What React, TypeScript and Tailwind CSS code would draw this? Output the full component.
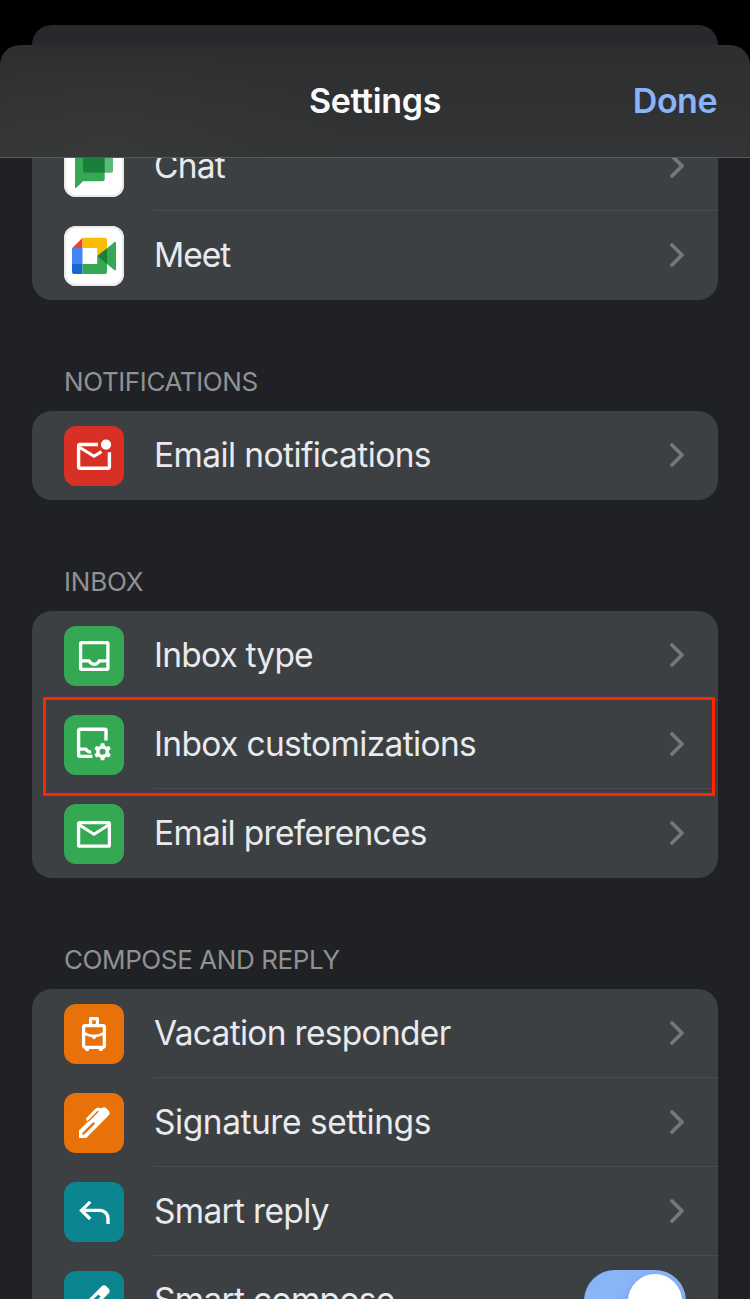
import type { ReactNode } from 'react';

const FONT = "font-['Inter','Liberation_Sans',sans-serif]";

function Chevron() {
  return (
    <svg className="mr-[33px] h-[26px] w-[16px] shrink-0" viewBox="0 0 16 26" fill="none">
      <path d="M3 3 L13 13 L3 23" stroke="#75787b" strokeWidth="3.8" strokeLinecap="round" strokeLinejoin="round" />
    </svg>
  );
}

function Glyph({ children }: { children: ReactNode }) {
  return (
    <svg className="h-[60px] w-[60px]" viewBox="0 0 60 60" fill="none">
      {children}
    </svg>
  );
}

const ChatIcon = () => (
  <Glyph>
    <path d="M11 10 H38.7 a2 2 0 0 1 2 2 V42.3 a2 2 0 0 1-2 2 H19 L12.4 50.8 Q11 51.6 11 50 Z" fill="#34a853" />
    <path d="M19 8 H47 a2 2 0 0 1 2 2 V33.7 a2 2 0 0 1-2 2 H19 Z" fill="#5bb974" />
    <path d="M19 8 H40.7 V35.7 H21 a2 2 0 0 1-2-2 Z" fill="#188038" />
  </Glyph>
);

const MeetIcon = () => (
  <Glyph>
    <path d="M8 22.2 L18.5 11.7 V22.2 Z" fill="#ea4335" />
    <path d="M8 22 H18.5 V38 H8 Z" fill="#4285f4" />
    <path d="M8 38 H18.5 V48 H10 a2 2 0 0 1-2-2 Z" fill="#1967d2" />
    <path d="M18.5 11.7 H41 a2 2 0 0 1 2 2 V24 L33.2 30 V22 H18.5 Z" fill="#fbbc04" />
    <path d="M18.5 38 H33.2 V30 L43 37 V46 a2 2 0 0 1-2 2 H18.5 Z" fill="#34a853" />
    <path d="M43 22.3 L50.3 16.2 Q52 15.2 52 17 V43 Q52 45.2 50.3 44 L43 38 Z" fill="#34a853" />
    <path d="M33.2 30 L43 22.2 V38 Z" fill="#188038" />
  </Glyph>
);

const MailUnreadIcon = () => (
  <Glyph>
    <path d="M34 18.5 H16 a1.4 1.4 0 0 0-1.4 1.4 V40.8 a1.4 1.4 0 0 0 1.4 1.4 H44 a1.4 1.4 0 0 0 1.4-1.4 V26.3" stroke="#fff" strokeWidth="3.4" />
    <path d="M15 21 L30 30.2 L37.5 25.6" stroke="#fff" strokeWidth="3.1" />
    <circle cx="42" cy="18.6" r="5.1" fill="#fff" />
  </Glyph>
);

const InboxIcon = () => (
  <Glyph>
    <rect x="16.6" y="16.6" width="27.3" height="26.7" rx="1" stroke="#fff" strokeWidth="3.3" />
    <path d="M16 34.8 H25 Q27 38.4 30.2 38.4 T35.4 34.8 H44" stroke="#fff" strokeWidth="3.2" />
  </Glyph>
);

const InboxGearIcon = () => (
  <Glyph>
    <path d="M42 25.4 V15.4 a1.1 1.1 0 0 0-1.1-1.1 H15.7 a1.1 1.1 0 0 0-1.1 1.1 V40.3 a1.1 1.1 0 0 0 1.1 1.1 H28.4" stroke="#fff" strokeWidth="3.4" />
    <path d="M14.6 32.4 H22.6 Q24.2 35 27.2 35.6 V38.8 Q23 38.6 20.6 35.8 H14.6 Z" fill="#fff" />
    <circle cx="38.6" cy="36.7" r="4.7" stroke="#fff" strokeWidth="3.3" />
    <g fill="#fff">
      <path d="M36 32.4 L36.9 28.2 H40.3 L41.2 32.4 Z" />
      <path transform="rotate(60 38.6 36.7)" d="M36 32.4 L36.9 28.2 H40.3 L41.2 32.4 Z" />
      <path transform="rotate(120 38.6 36.7)" d="M36 32.4 L36.9 28.2 H40.3 L41.2 32.4 Z" />
      <path transform="rotate(180 38.6 36.7)" d="M36 32.4 L36.9 28.2 H40.3 L41.2 32.4 Z" />
      <path transform="rotate(240 38.6 36.7)" d="M36 32.4 L36.9 28.2 H40.3 L41.2 32.4 Z" />
      <path transform="rotate(300 38.6 36.7)" d="M36 32.4 L36.9 28.2 H40.3 L41.2 32.4 Z" />
    </g>
  </Glyph>
);

const MailIcon = () => (
  <Glyph>
    <rect x="14.6" y="18.6" width="30.8" height="23.6" rx="1.2" stroke="#fff" strokeWidth="3.3" />
    <path d="M15 20.8 L30 30.2 L45 20.8" stroke="#fff" strokeWidth="3.1" />
  </Glyph>
);

const LuggageIcon = () => (
  <Glyph>
    <rect x="19.6" y="21.6" width="20.8" height="21.8" rx="1.8" stroke="#fff" strokeWidth="3.3" />
    <path d="M26.6 21 V14.7 H33.4 V21" stroke="#fff" strokeWidth="3.3" strokeLinejoin="round" />
    <path d="M19.5 28.8 Q24 32 30 32 T40.5 28.8" stroke="#fff" strokeWidth="2.6" />
    <path d="M28.2 32 H31.8 V34 L30 35.5 L28.2 34 Z M21 44.5 H25.2 V46 L24.2 47 H22 L21 46 Z M34.8 44.5 H39 V46 L38 47 H35.8 L34.8 46 Z" fill="#fff" />
  </Glyph>
);

const PenIcon = () => (
  <Glyph>
    <path d="M15 45 V37.6 L33.2 19.3 L37.6 15 Q40 13.6 42 15 L45 18 Q46.4 20 45 22 L22.2 45 Z" fill="#fff" />
    <path d="M18.3 41.7 V40 L29.3 29 L31 30.7 L20 41.7 Z" fill="#e8710a" />
    <path d="M23.6 26 L32 17.3 Q34.4 15 36.8 17.4" stroke="#fff" strokeWidth="3.2" strokeLinecap="round" />
    <path d="M24.5 28 L34.3 18.2" stroke="#e8710a" strokeWidth="1.3" />
  </Glyph>
);

const ReplyIcon = () => (
  <Glyph>
    <path d="M18 28.4 H36 a8 8 0 0 1 8 8 V42" stroke="#fff" strokeWidth="3.3" />
    <path d="M26.2 19.8 L17.5 28.4 L26.2 37" stroke="#fff" strokeWidth="3.3" />
  </Glyph>
);

const PencilIcon = () => (
  <Glyph>
    <path d="M15 45 V38 L38 15 Q40 13.4 42 15 L45 18 Q46.4 20 45 22 L22 45 Z" fill="#fff" />
    <path d="M18.3 41.7 V39.5 L34.3 23.4 L36.6 25.7 L20.6 41.7 Z" fill="#0b858f" />
  </Glyph>
);

interface RowProps {
  label: string;
  tile: string;
  icon: ReactNode;
  track: string;
  last?: boolean;
  toggle?: boolean;
}

function Row({ label, tile, icon, track, last, toggle }: RowProps) {
  return (
    <div className="flex h-[89px] pl-8">
      <div className={`mt-[15px] h-[60px] w-[60px] shrink-0 overflow-hidden rounded-[12px] ${tile}`}>{icon}</div>
      <div
        className={`ml-[30px] flex flex-1 items-center justify-between border-b ${last ? 'border-transparent' : 'border-[#4a4d50]'}`}
      >
        <span className={`whitespace-nowrap text-[33.5px] font-[370] leading-[40px] text-[#e8eaed] ${track}`}>{label}</span>
        {toggle ? (
          <div className="mr-8 mt-[2px] flex h-[62px] w-[102px] shrink-0 justify-end rounded-full bg-[#8ab4f8] p-1">
            <div className="h-[54px] w-[54px] rounded-full bg-white shadow-[0_4px_10px_rgba(0,0,0,0.15)]" />
          </div>
        ) : (
          <Chevron />
        )}
      </div>
    </div>
  );
}

function SectionLabel({ children, track }: { children: string; track: string }) {
  return (
    <h2 className={`h-[111px] pl-8 pt-[66px] text-[26px] font-normal leading-8 text-[#909195] ${track}`}>{children}</h2>
  );
}

const CARD = 'rounded-[20px] bg-[#3c4043]';

export default function App() {
  return (
    <div className={`relative flex h-[1299px] w-[750px] flex-col overflow-hidden bg-black ${FONT}`}>
      <div className="mx-8 mt-[25px] h-5 shrink-0 rounded-t-[20px] bg-[#29282d]" />
      <header className="grid h-[113px] shrink-0 grid-cols-3 items-center rounded-t-[20px] border-b border-[#58595a] bg-[radial-gradient(ellipse_260px_110px_at_105px_112px,#363938,transparent),linear-gradient(#2d2e2f,#333435)] px-[33px] pb-[2px] text-[34px]">
        <span />
        <h1 className="text-center font-semibold tracking-[-0.35px] text-[#fafafa]">Settings</h1>
        <button className="text-right font-semibold tracking-[-0.5px] text-[#8ab4f8]">Done</button>
      </header>

      <main className="min-h-0 flex-1 overflow-hidden bg-[#202124] px-8">
        <div className={`-mt-9 ${CARD}`}>
          <Row label="Chat" track="tracking-[-0.8px]" tile="bg-white ring-2 ring-inset ring-[#e8eaed]" icon={<ChatIcon />} />
          <Row label="Meet" track="tracking-[-1px]" tile="bg-white ring-2 ring-inset ring-[#e8eaed]" icon={<MeetIcon />} last />
        </div>

        <SectionLabel track="tracking-[-0.4px]">NOTIFICATIONS</SectionLabel>
        <div className={CARD}>
          <Row label="Email notifications" track="tracking-[-0.6px]" tile="bg-[#d93025]" icon={<MailUnreadIcon />} last />
        </div>

        <SectionLabel track="tracking-[-0.2px]">INBOX</SectionLabel>
        <div className={CARD}>
          <Row label="Inbox type" track="tracking-[-0.8px]" tile="bg-[#34a853]" icon={<InboxIcon />} />
          <Row label="Inbox customizations" track="tracking-[-0.65px]" tile="bg-[#34a853]" icon={<InboxGearIcon />} />
          <Row label="Email preferences" track="tracking-[-0.7px]" tile="bg-[#34a853]" icon={<MailIcon />} last />
        </div>

        <SectionLabel track="tracking-[-0.4px]">COMPOSE AND REPLY</SectionLabel>
        <div className={CARD}>
          <Row label="Vacation responder" track="tracking-[-0.7px]" tile="bg-[#e8710a]" icon={<LuggageIcon />} />
          <Row label="Signature settings" track="tracking-[-0.45px]" tile="bg-[#e8710a]" icon={<PenIcon />} />
          <Row label="Smart reply" track="tracking-[-0.68px]" tile="bg-[#0b858f]" icon={<ReplyIcon />} />
          <Row label="Smart compose" track="tracking-[-0.68px]" tile="bg-[#0b858f]" icon={<PencilIcon />} toggle last />
        </div>
      </main>

      <div className="pointer-events-none absolute left-[43px] top-[697px] h-[99px] w-[672px] rounded-[1px] border-[3px] border-[#ff2600]" />
    </div>
  );
}
